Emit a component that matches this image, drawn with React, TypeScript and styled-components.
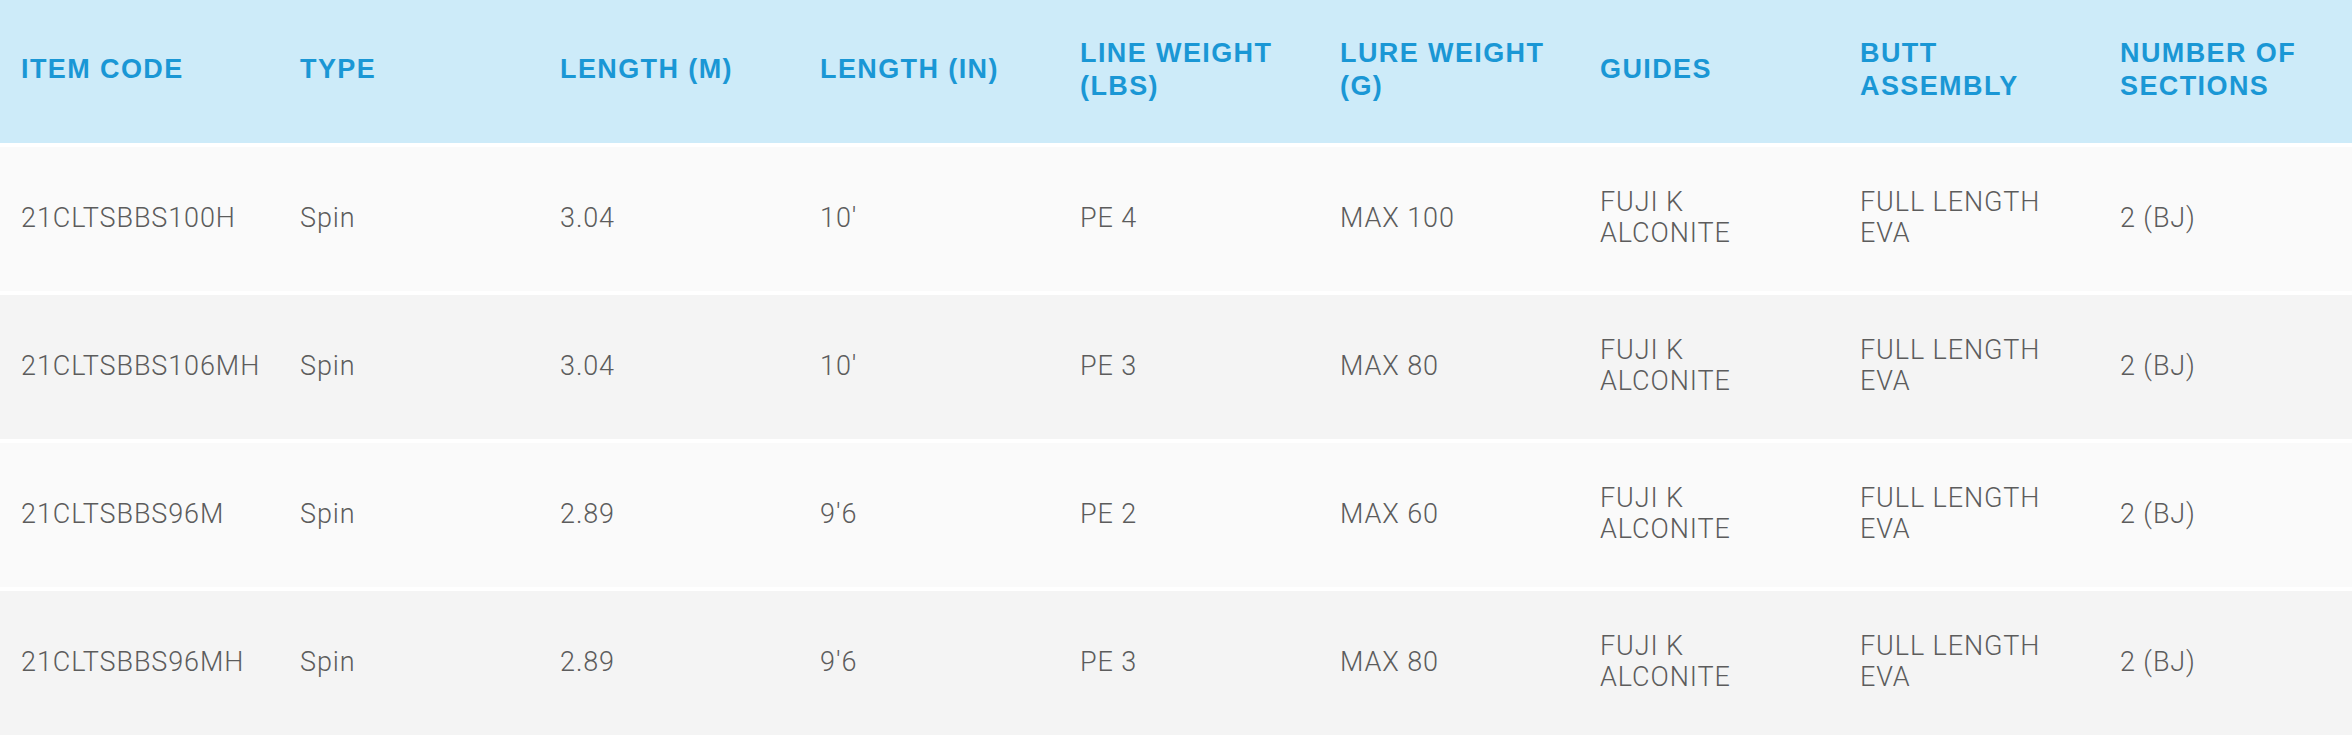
import * as React from 'react'
import styled, { createGlobalStyle } from 'styled-components'

const GlobalStyle = createGlobalStyle`
  *, *::before, *::after {
    box-sizing: border-box;
  }
  html, body {
    margin: 0;
    padding: 0;
    background: #ffffff;
  }
  body {
    font-family: 'Liberation Sans', Arial, sans-serif;
  }
`

const Table = styled.table`
  width: 2352px;
  table-layout: fixed;
  border-collapse: separate;
  border-spacing: 0;
`

const Col = styled.col<{ $width: number }>`
  width: ${(p) => p.$width}px;
`

const HeadCell = styled.th`
  height: 143px;
  padding: 0 16px 4px 21px;
  background: #cdebf9;
  color: #1a97d5;
  font-size: 27px;
  font-weight: 700;
  line-height: 33px;
  letter-spacing: 1.4px;
  text-align: left;
  vertical-align: middle;
  text-transform: uppercase;
  white-space: pre-line;
`

const Row = styled.tr<{ $shade: boolean }>`
  background: ${(p) => (p.$shade ? '#f4f4f4' : '#fafafa')};
`

const Cell = styled.td`
  height: 148px;
  padding: 0 16px 2px 21px;
  border-top: 4px solid #ffffff;
  color: #5c5c5c;
  font-family: Roboto, 'Liberation Sans', sans-serif;
  font-size: 27px;
  font-weight: 300;
  line-height: 31px;
  letter-spacing: 0.9px;
  vertical-align: middle;
  white-space: pre-line;
`

const columns = [
  'Item code',
  'Type',
  'Length (m)',
  'Length (in)',
  'Line weight\n(lbs)',
  'Lure weight\n(g)',
  'Guides',
  'Butt\nassembly',
  'Number of\nsections',
]

const widths = [279, 260, 260, 260, 260, 260, 260, 260, 253]

const rows = [
  ['21CLTSBBS100H', 'Spin', '3.04', "10'", 'PE 4', 'MAX 100', 'FUJI K\nALCONITE', 'FULL LENGTH\nEVA', '2 (BJ)'],
  ['21CLTSBBS106MH', 'Spin', '3.04', "10'", 'PE 3', 'MAX 80', 'FUJI K\nALCONITE', 'FULL LENGTH\nEVA', '2 (BJ)'],
  ['21CLTSBBS96M', 'Spin', '2.89', "9'6", 'PE 2', 'MAX 60', 'FUJI K\nALCONITE', 'FULL LENGTH\nEVA', '2 (BJ)'],
  ['21CLTSBBS96MH', 'Spin', '2.89', "9'6", 'PE 3', 'MAX 80', 'FUJI K\nALCONITE', 'FULL LENGTH\nEVA', '2 (BJ)'],
]

export default function App() {
  return (
    <>
      <GlobalStyle />
      <Table>
        <colgroup>
          {widths.map((w, i) => (
            <Col key={i} $width={w} />
          ))}
        </colgroup>
        <thead>
          <tr>
            {columns.map((c) => (
              <HeadCell key={c}>{c}</HeadCell>
            ))}
          </tr>
        </thead>
        <tbody>
          {rows.map((r, i) => (
            <Row key={r[0]} $shade={i % 2 === 1}>
              {r.map((v, j) => (
                <Cell key={j}>{v}</Cell>
              ))}
            </Row>
          ))}
        </tbody>
      </Table>
    </>
  )
}
